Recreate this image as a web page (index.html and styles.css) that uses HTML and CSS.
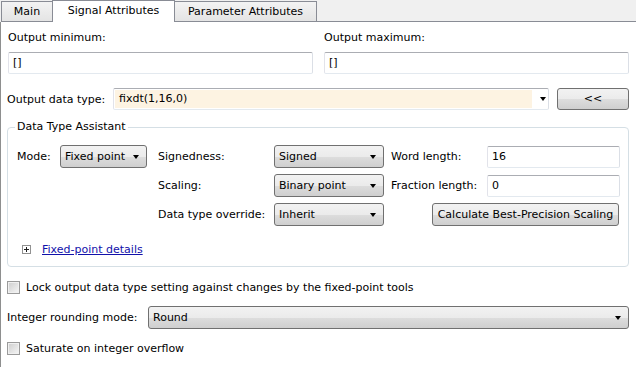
FILE: index.html
```html
<!DOCTYPE html>
<html lang="en">
<head>
    <meta charset="UTF-8">
    <title>Signal Attributes</title>
    <link rel="stylesheet" href="styles.css">
</head>
<body>
    <div class="tabs">
        <div class="tab tab-main">Main</div>
        <div class="tab tab-signal active">Signal Attributes</div>
        <div class="tab tab-param">Parameter Attributes</div>
        <div class="tab-fill"></div>
    </div>

    <div class="panel">
        <div class="minmax">
            <div class="field">
                <div class="label">Output minimum:</div>
                <div class="textbox">[]</div>
            </div>
            <div class="field">
                <div class="label">Output maximum:</div>
                <div class="textbox">[]</div>
            </div>
        </div>

        <div class="dtype-row">
            <span class="dtype-label">Output data type:</span>
            <div class="combo">
                <span class="combo-text">fixdt(1,16,0)</span>
                <span class="combo-btn"><i class="arrow"></i></span>
            </div>
            <div class="btn btn-back">&lt;&lt;</div>
        </div>

        <fieldset class="assistant">
            <legend>Data Type Assistant</legend>
            <div class="assist-grid">
                <span>Mode:</span>
                <div class="select w-mode"><span>Fixed point</span><i class="arrow"></i></div>
                <span>Signedness:</span>
                <div class="select w-mid"><span>Signed</span><i class="arrow"></i></div>
                <span>Word length:</span>
                <div class="textbox">16</div>

                <span class="col3">Scaling:</span>
                <div class="select w-mid"><span>Binary point</span><i class="arrow"></i></div>
                <span>Fraction length:</span>
                <div class="textbox">0</div>

                <span class="col3">Data type override:</span>
                <div class="select w-mid"><span>Inherit</span><i class="arrow"></i></div>
                <div class="btn btn-calc">Calculate Best-Precision Scaling</div>
            </div>

            <div class="details-row">
                <svg class="expander" width="9" height="9" viewBox="0 0 9 9">
                    <rect x="0.5" y="0.5" width="8" height="8" fill="#fff" stroke="#919191"/>
                    <path d="M2 4.5h5M4.5 2v5" stroke="#1e1e1e" stroke-width="1"/>
                </svg>
                <a href="#" class="link">Fixed-point details</a>
            </div>
        </fieldset>

        <div class="check-row lock">
            <span class="checkbox"></span>
            <span>Lock output data type setting against changes by the fixed-point tools</span>
        </div>

        <div class="round-row">
            <span class="round-label">Integer rounding mode:</span>
            <div class="select wide"><span>Round</span><i class="arrow"></i></div>
        </div>

        <div class="check-row saturate">
            <span class="checkbox"></span>
            <span>Saturate on integer overflow</span>
        </div>
    </div>
</body>
</html>
```

FILE: styles.css
```css
* {
    box-sizing: border-box;
}

body {
    margin: 0;
    width: 636px;
    height: 367px;
    overflow: hidden;
    background: #ffffff;
    color: #000000;
    font-family: "DejaVu Sans", Verdana, sans-serif;
    font-size: 11px;
}

/* tab strip */
.tabs {
    display: flex;
    height: 22px;
    background: #f0f0f0;
}

.tab {
    height: 21px;
    margin-top: 1px;
    border: 1px solid #898c95;
    background: linear-gradient(#f3f3f3, #e4e4e4);
    text-align: center;
    line-height: 20px;
}

.tab-main {
    width: 52px;
    margin-left: 1px;
}

.tab-signal {
    width: 123px;
    margin-left: -1px;
}

.tab-param {
    width: 143px;
    margin-left: -1px;
}

.tab.active {
    height: 22px;
    margin-top: 0;
    border-bottom: none;
    background: #ffffff;
    line-height: 19px;
}

.tab-fill {
    flex: 1;
    border-bottom: 1px solid #898c95;
}

/* panel */
.panel {
    height: 345px;
    border-left: 1px solid #8e8f8f;
    padding: 9px 7px 0 6px;
}

.minmax {
    display: grid;
    grid-template-columns: 305px 305px;
    column-gap: 11px;
    padding-left: 1px;
}

.label {
    line-height: 14px;
    margin-bottom: 7px;
}

.textbox {
    height: 22px;
    border: 1px solid;
    border-color: #abadb3 #dbdfe6 #e3e9ef #e2e3ea;
    border-radius: 2px;
    padding-left: 4px;
    line-height: 20px;
    background: #ffffff;
}

.dtype-row {
    display: flex;
    align-items: center;
    margin-top: 14px;
    height: 22px;
}

.dtype-label {
    width: 106px;
    white-space: nowrap;
}

.combo {
    flex: 1;
    display: flex;
    height: 22px;
    padding: 1px;
    border: 1px solid;
    border-color: #abadb3 #dbdfe6 #e3e9ef #e2e3ea;
    border-radius: 2px;
}

.combo-text {
    flex: 1;
    padding-left: 4px;
    line-height: 18px;
    background: #fdf3e2;
}

.combo-btn {
    width: 15px;
    display: flex;
    align-items: center;
    justify-content: flex-end;
    padding-right: 1px;
}

.arrow {
    display: block;
    width: 0;
    height: 0;
    border-top: 4px solid #000000;
    border-left: 3.5px solid transparent;
    border-right: 3.5px solid transparent;
}

.btn {
    height: 22px;
    border: 1px solid #707070;
    border-radius: 3px;
    background: linear-gradient(#f2f2f2 0%, #ebebeb 50%, #dddddd 51%, #cfcfcf 100%);
    text-align: center;
    line-height: 20px;
}

.btn-back {
    width: 72px;
    margin-left: 8px;
}

.select {
    display: flex;
    align-items: center;
    justify-content: space-between;
    height: 23px;
    padding: 0 7px 0 4px;
    border: 1px solid #707070;
    border-radius: 3px;
    background: linear-gradient(#f2f2f2 0%, #ebebeb 50%, #dddddd 51%, #cfcfcf 100%);
}

.w-mode {
    width: 87px;
}

.w-mid {
    width: 110px;
}

/* data type assistant group */
.assistant {
    margin: 10px 0 0 0;
    padding: 11px 8px 10px 9px;
    border: 1px solid #d5dfe5;
    border-radius: 4px;
    min-width: 0;
}

.assistant legend {
    padding: 0 2px;
    margin-left: -2px;
    line-height: 14px;
}

.assist-grid {
    display: grid;
    grid-template-columns: 43px 98px 116px 117px 96px 133px;
    grid-auto-rows: 23px;
    row-gap: 6px;
    align-items: center;
}

.col3 {
    grid-column: 3;
}

.btn-calc {
    grid-column: 5 / 7;
    justify-self: end;
    width: 187px;
    height: 23px;
    margin-right: 1px;
    line-height: 21px;
}

.details-row {
    display: flex;
    align-items: center;
    gap: 11px;
    height: 14px;
    margin-top: 16px;
    padding-left: 5px;
}

.link {
    color: #1111aa;
    text-decoration: underline;
}

/* bottom options */
.check-row {
    display: flex;
    align-items: center;
    gap: 6px;
    height: 14px;
    margin-top: 13px;
}

.checkbox {
    width: 13px;
    height: 13px;
    border: 1px solid #9a9a9a;
    background: linear-gradient(135deg, #cdcdcd, #f6f6f6);
    box-shadow: inset 0 0 0 1px #f0f0f0;
}

.round-row {
    display: flex;
    align-items: center;
    margin-top: 12px;
    height: 23px;
}

.round-label {
    width: 141px;
    white-space: nowrap;
}

.select.wide {
    flex: 1;
}

.saturate {
    margin-top: 12px;
}
```
